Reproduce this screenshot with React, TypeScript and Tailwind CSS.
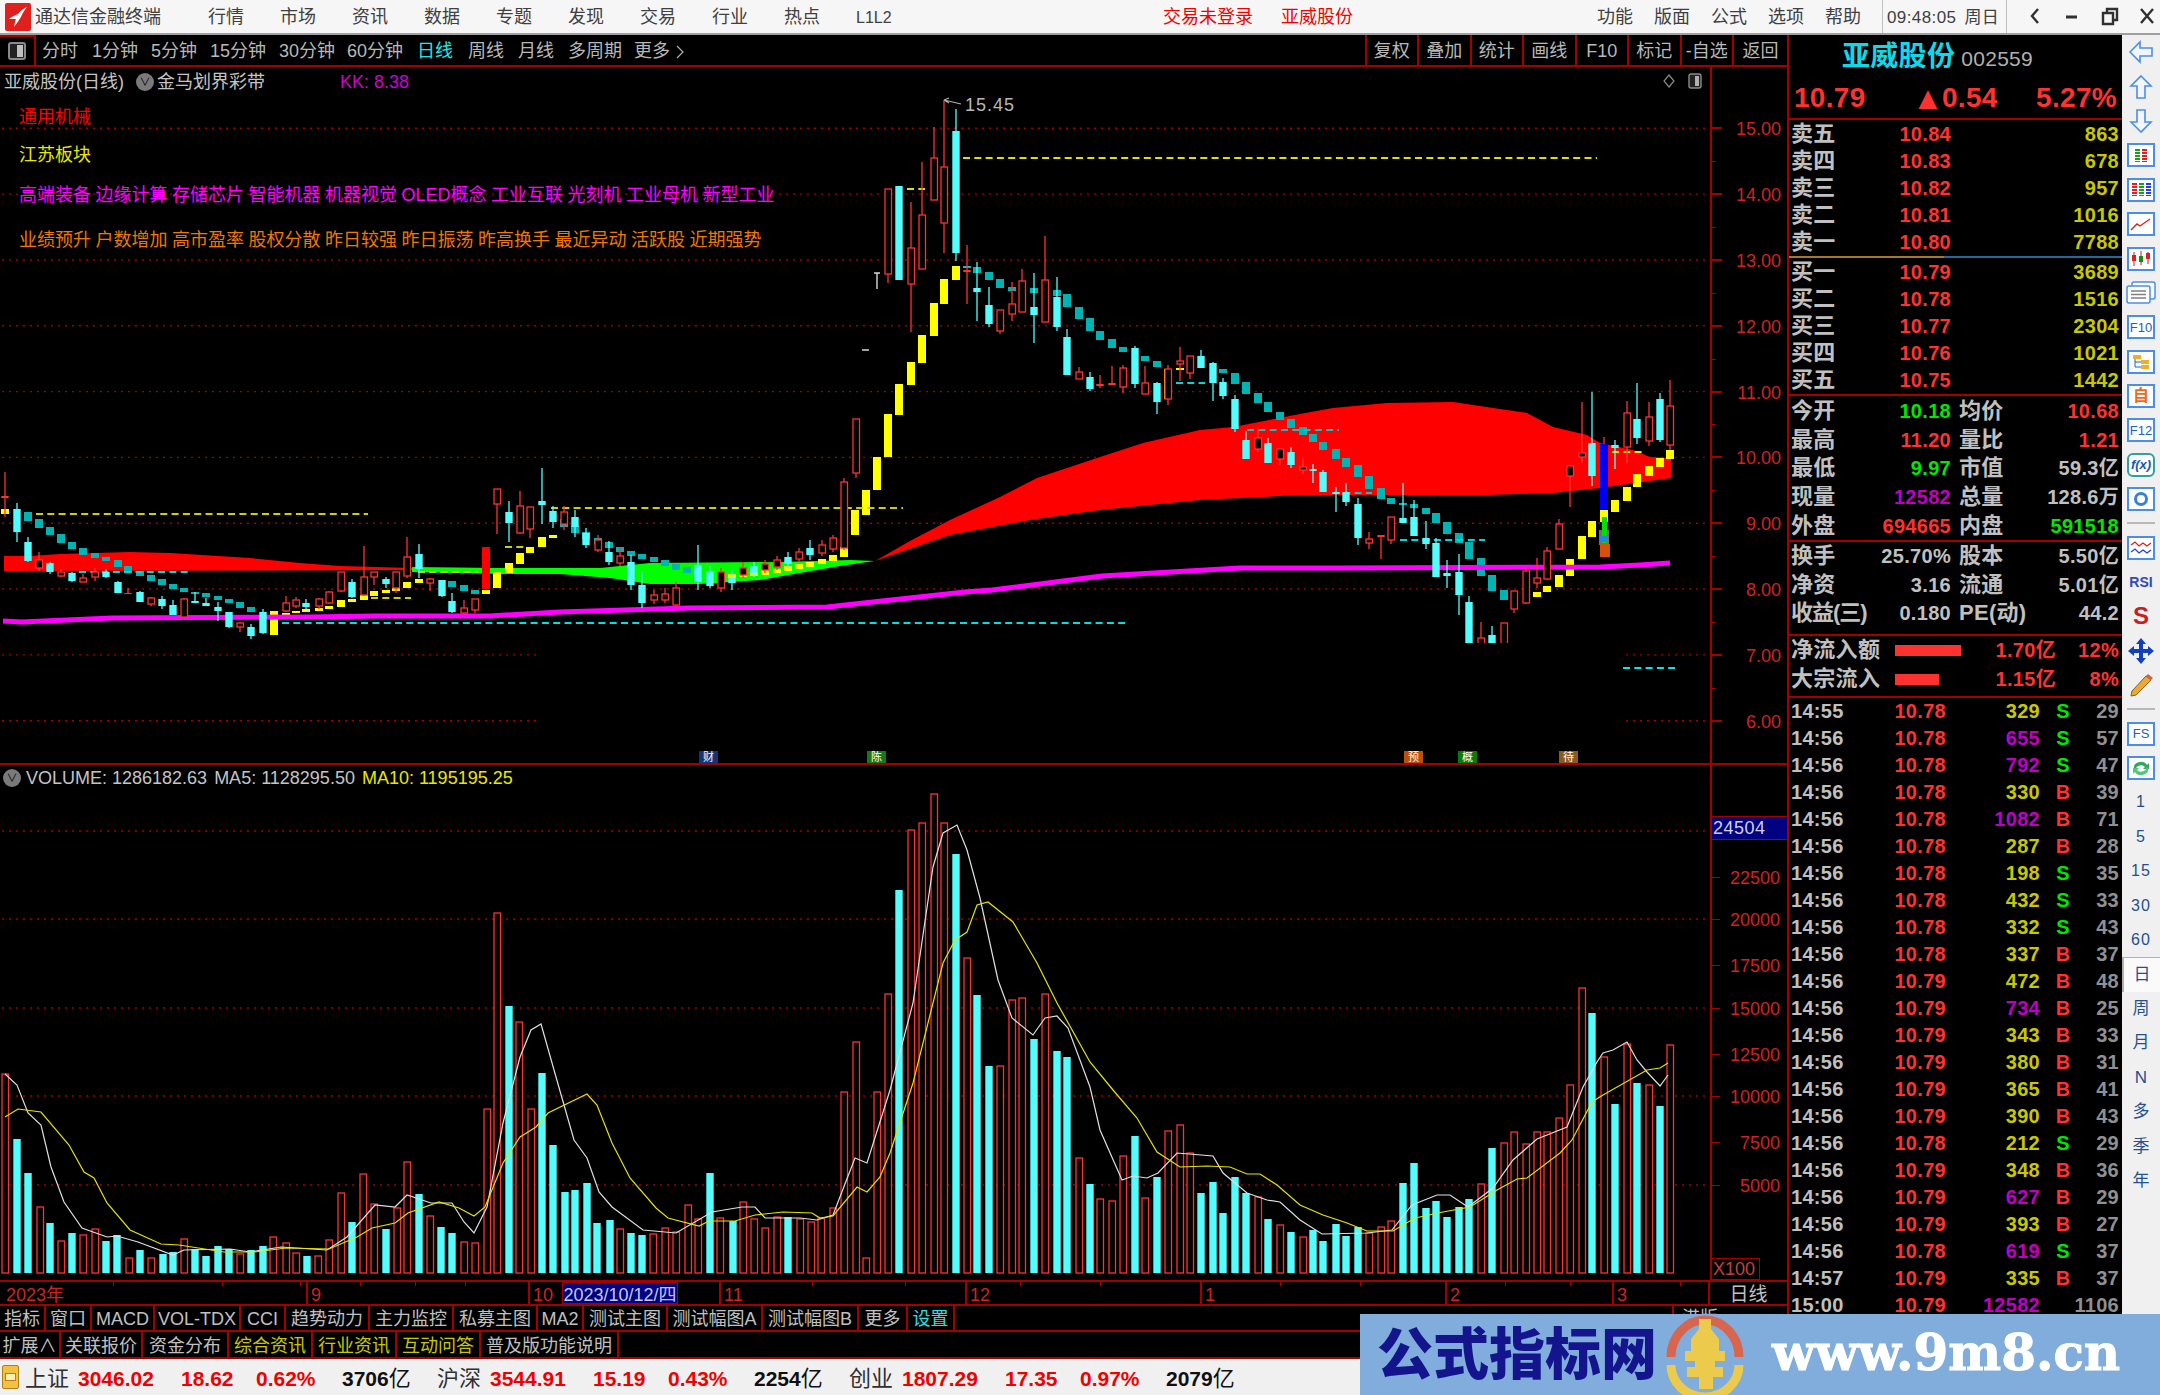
import React from "react";

type Candle = [number, number, number, number, number, "r" | "c" | "f"];
type Band = [number, number, number, "t" | "y" | "x"];

const RED = "#ff3232";
const CYAN = "#54fcfc";
const LINE = "border-[#a50000]";

// [x, top, bottom, colour] the ribbon squares behind the candles
const bands: Band[] = [
  [5,509,514,"y"],[28,512,521,"t"],[39,519,528,"t"],[50,527,535,"t"],[61,534,543,"t"],[72,542,549,"t"],[83,548,555,"t"],[95,553,558,"t"],[106,557,561,"t"],[118,560,567,"t"],[128,566,573,"t"],[140,571,576,"t"],[151,575,581,"t"],[162,579,585,"t"],[173,584,589,"t"],[184,588,592,"t"],[195,592,594,"t"],[206,593,597,"t"],[218,596,600,"t"],[229,599,603,"t"],[240,602,608,"t"],[251,607,612,"t"],[274,611,635,"y"],[286,613,617,"y"],[296,611,613,"y"],[306,609,612,"y"],[319,608,611,"y"],[329,606,609,"y"],[341,600,607,"y"],[352,599,602,"y"],[364,595,600,"y"],[374,591,596,"y"],[386,590,593,"y"],[396,588,591,"y"],[407,582,588,"y"],[419,579,583,"y"],[452,581,587,"t"],[464,585,591,"t"],[475,590,594,"t"],[486,590,594,"y"],[497,572,588,"y"],[509,563,573,"y"],[520,553,564,"y"],[530,547,553,"y"],[542,537,547,"y"],[553,535,538,"y"],
  [564,519,527,"t"],[575,526,533,"t"],[586,532,539,"t"],[598,538,544,"t"],[609,542,548,"t"],[620,547,552,"t"],[631,551,556,"t"],[642,554,559,"t"],[654,557,562,"t"],[665,560,566,"t"],[676,564,570,"t"],[687,567,573,"t"],[698,570,575,"t"],[732,574,578,"y"],[743,573,577,"y"],[754,572,576,"y"],[765,570,575,"y"],[777,569,573,"y"],[788,566,571,"y"],[799,564,569,"y"],[810,562,567,"y"],[822,559,564,"y"],[833,555,561,"y"],[844,547,557,"y"],[855,510,535,"y"],[866,490,515,"y"],[877,457,490,"y"],
  [888,414,457,"y"],[899,384,415,"y"],[911,362,385,"y"],[922,335,363,"y"],[934,303,336,"y"],[944,279,304,"y"],[956,266,280,"y"],[967,266,268,"t"],[977,267,273,"t"],[989,272,280,"t"],[1000,279,288,"t"],[1012,287,291,"t"],[1034,288,293,"t"],[1057,290,296,"t"],[1067,294,307,"t"],[1079,307,319,"t"],[1090,318,331,"t"],[1100,331,340,"t"],[1112,339,348,"t"],[1123,347,352,"t"],[1145,356,361,"t"],[1157,361,367,"t"],[1168,369,399,"y"],[1180,368,370,"y"],[1223,369,373,"t"],[1235,373,384,"t"],[1246,382,394,"t"],[1258,393,403,"t"],[1268,402,412,"t"],[1280,412,420,"t"],[1291,419,428,"t"],
  [1303,427,435,"t"],[1313,434,442,"t"],[1323,442,450,"t"],[1336,449,459,"t"],[1346,458,467,"t"],[1358,465,477,"t"],[1369,476,489,"t"],[1381,488,499,"t"],[1391,498,504,"t"],[1403,503,505,"t"],[1414,504,508,"t"],[1426,508,514,"t"],[1436,513,523,"t"],[1447,522,534,"t"],[1459,533,543,"t"],[1469,542,559,"t"],[1481,558,576,"t"],[1492,575,591,"t"],[1504,590,600,"t"],[1537,592,597,"y"],[1547,586,592,"y"],[1559,575,587,"y"],[1570,559,576,"y"],[1582,536,559,"y"],[1592,521,537,"y"],[1604,510,522,"y"],[1615,500,512,"y"],[1627,487,501,"y"],[1637,474,487,"y"],[1649,466,476,"y"],[1660,458,467,"y"],[1670,450,459,"y"],
];

// [x, high, top, bottom, low, kind]
const candles: Candle[] = [
  [5,472,496,498,517,"f"],[17,503,509,532,542,"c"],[28,537,542,561,562,"c"],[39,552,560,568,571,"r"],[50,562,563,572,574,"c"],[61,569,572,576,577,"r"],[72,572,573,581,582,"c"],[83,574,578,582,582,"r"],[95,568,572,577,581,"r"],[106,569,572,577,578,"c"],[118,581,582,593,593,"c"],[128,588,593,594,594,"f"],[140,591,592,602,602,"c"],[151,597,598,604,606,"r"],[162,596,599,606,609,"c"],[173,600,605,615,615,"c"],[184,598,599,617,617,"r"],[195,592,601,603,603,"c"],[206,598,603,606,606,"c"],[218,602,607,611,621,"c"],[229,612,612,627,628,"c"],[240,622,623,627,632,"r"],[251,624,627,636,639,"c"],[263,609,612,633,634,"c"],[286,596,603,611,612,"r"],[296,597,600,606,608,"r"],[306,599,603,607,609,"c"],[319,598,599,606,609,"r"],[329,591,592,603,604,"r"],[341,572,572,591,592,"r"],[352,579,582,597,598,"c"],[364,546,577,595,596,"r"],[374,572,572,577,585,"r"],[386,577,579,584,588,"c"],[396,572,572,588,593,"r"],[407,537,557,576,578,"r"],[419,544,554,569,578,"c"],[430,578,579,583,591,"r"],[442,580,580,596,597,"c"],[452,593,601,612,613,"c"],[464,600,608,613,614,"r"],[475,599,599,610,613,"r"],[497,489,489,504,534,"r"],[509,501,512,523,542,"c"],[520,491,506,533,534,"r"],[530,507,507,529,538,"r"],[542,468,501,505,524,"c"],[553,506,511,522,528,"c"],
  [564,506,512,524,530,"r"],[575,510,517,527,537,"c"],[586,528,533,545,548,"c"],[598,535,540,550,552,"r"],[609,541,552,562,565,"c"],[620,548,556,563,566,"r"],[631,555,562,585,590,"c"],[642,572,585,603,608,"c"],[654,590,595,600,604,"r"],[665,588,594,600,603,"r"],[676,582,588,605,607,"r"],[698,545,565,582,590,"c"],[710,566,571,586,588,"c"],[721,568,572,588,592,"r"],[732,570,578,583,590,"c"],[743,562,568,575,578,"r"],[754,562,566,573,577,"c"],[765,560,564,570,573,"r"],[777,556,560,567,570,"r"],[788,552,557,564,568,"c"],[799,548,552,559,562,"r"],[810,540,548,555,560,"c"],[822,540,545,553,556,"r"],[833,535,538,549,552,"r"],[844,478,482,548,550,"r"],
  [856,419,419,473,478,"r"],[888,189,189,274,283,"r"],[899,186,186,280,280,"c"],[911,202,248,284,332,"r"],[922,162,215,269,269,"r"],[934,127,158,200,200,"r"],[944,100,167,223,253,"r"],[956,109,131,253,261,"c"],[967,245,270,272,304,"f"],[977,262,288,292,321,"c"],[989,287,305,324,327,"c"],[1000,310,310,331,334,"r"],[1012,282,304,314,321,"r"],[1022,269,281,312,312,"r"],[1034,273,307,315,343,"c"],[1045,236,280,322,322,"r"],[1057,277,297,327,331,"c"],[1067,329,337,375,375,"c"],[1079,367,372,379,379,"r"],[1090,372,377,389,391,"c"],[1100,375,384,386,388,"f"],[1112,366,383,385,385,"f"],[1123,365,368,387,393,"r"],[1135,346,348,384,388,"c"],[1145,366,383,394,394,"r"],[1157,382,383,402,414,"c"],[1168,365,369,399,405,"r"],[1180,347,361,364,381,"r"],[1190,356,356,373,379,"r"],[1201,350,356,368,368,"c"],[1213,362,363,383,401,"c"],[1223,378,382,396,399,"c"],[1235,395,399,429,432,"c"],[1246,431,440,459,459,"c"],[1258,428,438,449,452,"r"],[1268,438,443,463,463,"c"],[1280,449,449,459,465,"r"],[1291,447,452,465,468,"c"],
  [1303,458,467,470,474,"r"],[1313,464,469,471,483,"c"],[1323,470,472,492,492,"c"],[1336,487,492,494,512,"c"],[1346,483,492,502,506,"c"],[1358,498,504,538,545,"c"],[1369,532,539,543,549,"r"],[1381,535,535,537,559,"f"],[1391,517,517,540,544,"r"],[1403,483,518,523,523,"c"],[1414,500,517,536,536,"c"],[1426,521,538,544,549,"c"],[1436,538,543,577,577,"c"],[1447,560,573,576,588,"c"],[1459,554,572,595,615,"c"],[1469,596,602,650,650,"c"],[1481,622,638,650,650,"r"],[1492,626,635,650,650,"c"],[1504,623,623,650,650,"r"],[1514,591,591,609,613,"r"],[1526,567,571,603,604,"r"],[1537,558,578,583,588,"r"],[1547,547,551,579,580,"r"],[1559,519,524,549,549,"r"],[1570,466,466,476,507,"r"],[1582,402,453,457,463,"r"],[1592,392,443,476,486,"c"],[1615,440,445,448,469,"c"],[1627,401,413,447,463,"r"],[1637,383,419,438,444,"c"],[1649,402,417,441,446,"r"],[1660,393,399,440,442,"c"],[1670,380,406,445,450,"r"],
];

// [x, top, kind] volume bars, baseline 1273
const volumes: [number, number, "r" | "c"][] = [
  [5,1074,"r"],[17,1139,"c"],[28,1173,"c"],[40,1207,"r"],[50,1223,"c"],[61,1241,"r"],[72,1233,"c"],[83,1235,"r"],[95,1229,"r"],[106,1241,"c"],[117,1235,"c"],[129,1258,"r"],[140,1250,"c"],[151,1258,"r"],[163,1254,"c"],[173,1252,"c"],[184,1239,"r"],[195,1249,"c"],[206,1256,"c"],[218,1246,"c"],[229,1249,"c"],[240,1254,"r"],[251,1250,"c"],[263,1246,"c"],[273,1237,"r"],[286,1243,"r"],[296,1253,"r"],[307,1256,"c"],[318,1256,"r"],[329,1240,"r"],[341,1193,"r"],[352,1222,"c"],[363,1174,"r"],[374,1204,"r"],[386,1229,"c"],[397,1208,"r"],[407,1162,"r"],[419,1194,"c"],[430,1216,"r"],[441,1227,"c"],[452,1233,"c"],[464,1242,"r"],[475,1243,"r"],[487,1109,"r"],[497,913,"r"],[509,1006,"c"],[519,1022,"r"],[531,1109,"r"],[542,1073,"c"],[553,1145,"c"],[565,1192,"c"],[575,1190,"c"],[587,1183,"c"],[597,1223,"c"],[610,1220,"c"],[620,1229,"r"],[631,1233,"c"],[642,1235,"c"],[653,1234,"r"],[665,1228,"r"],[676,1232,"r"],[688,1205,"r"],[698,1219,"r"],[710,1173,"c"],[720,1218,"r"],[733,1221,"c"],[743,1202,"r"],[754,1219,"r"],[765,1228,"r"],[777,1217,"r"],[788,1217,"c"],
  [800,1219,"r"],[811,1222,"r"],[821,1218,"r"],[833,1208,"r"],[844,1092,"r"],[856,1042,"r"],[866,1258,"r"],[877,1092,"r"],[888,994,"r"],[899,890,"c"],[911,830,"r"],[922,823,"r"],[934,794,"r"],[944,823,"r"],[956,854,"c"],[967,958,"r"],[977,995,"c"],[989,1066,"c"],[1000,1066,"r"],[1012,1000,"r"],[1022,998,"r"],[1034,1039,"c"],[1045,994,"r"],[1057,1051,"c"],[1067,1057,"c"],[1079,1158,"r"],[1090,1184,"c"],[1100,1199,"r"],[1112,1201,"r"],[1123,1156,"r"],[1135,1136,"c"],[1145,1198,"r"],[1157,1177,"c"],[1168,1131,"r"],[1180,1125,"r"],[1190,1153,"r"],[1201,1193,"c"],[1213,1182,"c"],[1223,1213,"c"],[1235,1177,"c"],[1246,1193,"c"],[1258,1197,"r"],[1268,1219,"c"],[1280,1225,"r"],[1291,1232,"c"],
  [1303,1237,"r"],[1313,1230,"c"],[1323,1241,"c"],[1336,1224,"c"],[1346,1236,"c"],[1358,1227,"c"],[1369,1233,"r"],[1381,1227,"r"],[1391,1221,"r"],[1403,1183,"c"],[1414,1163,"c"],[1426,1208,"c"],[1436,1201,"c"],[1447,1217,"c"],[1459,1207,"c"],[1469,1199,"c"],[1481,1184,"r"],[1492,1148,"c"],[1504,1143,"r"],[1514,1132,"r"],[1526,1144,"r"],[1537,1132,"r"],[1547,1132,"r"],[1559,1118,"r"],[1570,1085,"r"],[1582,988,"r"],[1592,1013,"c"],[1604,1057,"r"],[1615,1104,"c"],[1627,1044,"r"],[1637,1083,"c"],[1649,1085,"r"],[1660,1106,"c"],[1670,1045,"r"],
];

const ma5 = "5,1074 17,1085 28,1113 41,1125 51,1167 64,1202 82,1228 107,1237 117,1236 138,1242 173,1255 184,1250 230,1249 250,1252 281,1247 327,1250 347,1237 375,1205 395,1207 407,1195 431,1203 452,1203 464,1222 474,1233 487,1207 503,1123 520,1057 531,1030 541,1024 556,1077 574,1140 587,1158 599,1192 612,1207 643,1230 676,1233 712,1212 742,1207 755,1207 765,1218 800,1218 817,1220 833,1215 855,1158 867,1163 890,1090 913,1003 933,867 943,833 957,825 967,850 980,898 998,980 1012,1018 1033,1035 1045,1018 1057,1016 1068,1028 1090,1087 1100,1130 1122,1180 1133,1176 1147,1178 1158,1173 1177,1153 1213,1156 1223,1173 1247,1193 1267,1200 1280,1202 1300,1220 1322,1234 1367,1233 1392,1230 1412,1205 1437,1195 1450,1195 1468,1207 1493,1188 1513,1160 1537,1139 1567,1127 1583,1087 1597,1062 1603,1053 1613,1050 1627,1042 1637,1060 1647,1072 1660,1086 1668,1075";
const ma10 = "5,1117 18,1109 41,1112 69,1145 84,1172 94,1178 107,1203 130,1230 161,1244 179,1245 224,1252 255,1252 286,1248 329,1249 357,1237 372,1228 395,1223 408,1213 439,1202 459,1208 474,1216 485,1207 503,1163 520,1137 536,1127 548,1113 587,1094 597,1105 612,1143 630,1178 656,1208 668,1218 699,1226 709,1221 735,1221 755,1215 783,1212 812,1213 820,1218 833,1216 857,1187 867,1192 880,1177 890,1153 913,1083 943,963 955,940 967,932 977,905 988,902 1013,922 1037,963 1057,1003 1090,1062 1113,1090 1137,1118 1157,1152 1180,1167 1207,1166 1230,1167 1247,1174 1260,1174 1277,1185 1300,1205 1323,1215 1347,1223 1367,1231 1393,1231 1415,1218 1443,1212 1470,1207 1497,1190 1517,1179 1527,1178 1560,1153 1572,1140 1592,1102 1603,1095 1647,1070 1660,1068 1668,1063";

const cloudA = "4,556 30,556 60,554 130,552 170,553 250,558 300,563 340,566 412,568 412,570 4,571";
const cloudGreen = "412,567 500,568 600,568 650,563 780,562 850,560 875,561 840,566 800,573 760,580 700,584 650,584 610,578 560,574 500,574 412,572";
const cloudB = "875,561 910,541 950,520 1000,497 1037,478 1100,457 1143,443 1200,430 1233,427 1300,414 1333,408 1387,403 1453,402 1500,409 1527,413 1553,427 1587,435 1600,443 1633,450 1650,457 1671,458 1671,478 1643,482 1600,488 1553,493 1487,495 1300,495 1200,500 1100,510 1030,520 950,535";
const purple = "3,621 22,622 112,618 310,617 375,616 490,616 525,614 560,612 689,608 827,607 882,601 965,592 992,590 1102,576 1240,568 1340,568 1600,567 1640,565 1670,563";

// [y, x1, x2, colour] dashed level lines
const levels: [number, number, number, string][] = [
  [158,963,1597,"#e0e000"],[189,907,925,"#e0e000"],[267,963,970,"#00c8c8"],[514,36,368,"#d0d000"],[508,551,903,"#d0d000"],[572,79,188,"#00d8d8"],[623,282,1127,"#00e0e0"],[598,371,411,"#d0d000"],[572,418,478,"#d0d000"],[547,505,525,"#d0d000"],[383,1176,1205,"#00d8d8"],[430,1247,1339,"#00c8c8"],[493,1332,1372,"#00c8c8"],[540,1400,1485,"#00d8d8"],[668,1623,1675,"#00e8e8"],[452,1612,1642,"#e8e800"],
];

const priceAxis = [15, 14, 13, 12, 11, 10, 9, 8, 7, 6];
const volGrid = [831, 919, 1008, 1096, 1185];
const volAxis: [string, number][] = [["22500",877],["20000",919],["17500",965],["15000",1008],["12500",1054],["10000",1096],["7500",1142],["5000",1185]];

const priceY = (p: number) => 128.3 + (15 - p) * 65.82;

const bandColor = { t: "#00b4b4", y: "#ffff00", x: "#ff0000" };

function PriceSvg() {
  return (
    <svg className="absolute inset-0" width={1710} height={696} viewBox="0 67 1710 696">
      {priceAxis.map((p) => (
        <line key={p} x1={2} x2={1710} y1={priceY(p)} y2={priceY(p)} stroke="#a00000" strokeWidth={1.4} strokeDasharray="2 5" />
      ))}
      <polygon points={cloudA} fill="#ff0000" />
      <polygon points={cloudGreen} fill="#00ff00" />
      <polygon points={cloudB} fill="#ff0000" />
      <rect x={482} y={547} width={8} height={42} fill="#ff0000" />
      {bands.map(([x, t, b, c], i) => (
        <rect key={i} x={x - 4} y={t} width={8} height={b - t} fill={bandColor[c]} />
      ))}
      <polyline points={purple} fill="none" stroke="#ff00ff" strokeWidth={5} />
      {levels.map(([y, a, b, c], i) => (
        <line key={i} x1={a} x2={b} y1={y} y2={y} stroke={c} strokeWidth={2} strokeDasharray="7 4.3" />
      ))}
      {candles.map(([x, h, t, b, l, k], i) => {
        const col = k === "c" ? CYAN : RED;
        return (
          <g key={i}>
            <line x1={x} x2={x} y1={h} y2={l} stroke={col} strokeWidth={1.3} />
            {k === "r" ? (
              <rect x={x - 3} y={t} width={6.5} height={b - t} fill="#000" stroke={col} strokeWidth={1.3} />
            ) : (
              <rect x={x - 3.7} y={t} width={7.4} height={b - t} fill={col} />
            )}
          </g>
        );
      })}
      {/* the limit-up stack on the left of the last rally */}
      <rect x={1600} y={444} width={8} height={66} fill="#0000f0" />
      <line x1={1604} x2={1604} y1={437} y2={444} stroke={RED} strokeWidth={1.3} />
      <rect x={1599} y={530} width={10} height={15} fill="#707070" />
      <rect x={1602} y={517} width={5} height={26} fill="#00e000" />
      <rect x={1600} y={536} width={8} height={6} fill="#2088e0" />
      <rect x={1600} y={544} width={10} height={13} fill="#d85010" />
      {/* black patch that hides the lows in the reference */}
      <rect x={537} y={643} width={1084} height={100} fill="#000" />
      <path d="M944 100 L949 98 M944 100 L949 103 M944 100 L961 104" stroke="#b0b0b0" strokeWidth={1.2} fill="none" />
      <path d="M874 273 H880 M877 273 V289" stroke="#d8d8d8" strokeWidth={1.4} fill="none" />
      <path d="M862 350 H869" stroke="#d8d8d8" strokeWidth={1.5} />
    </svg>
  );
}

function VolumeSvg() {
  return (
    <svg className="absolute inset-0" width={1710} height={517} viewBox="0 765 1710 517">
      {volGrid.map((y) => (
        <line key={y} x1={2} x2={1710} y1={y} y2={y} stroke="#a00000" strokeWidth={1.4} strokeDasharray="2 5" />
      ))}
      {volumes.map(([x, t, k], i) =>
        k === "c" ? (
          <rect key={i} x={x - 3.7} y={t} width={7.4} height={1273 - t} fill={CYAN} />
        ) : (
          <rect key={i} x={x - 3} y={t} width={6.5} height={1273 - t} fill="#000" stroke={RED} strokeWidth={1.3} />
        ),
      )}
      <polyline points={ma5} fill="none" stroke="#e0e0e0" strokeWidth={1.2} />
      <polyline points={ma10} fill="none" stroke="#e4e400" strokeWidth={1.2} />
    </svg>
  );
}

const tags: [number, string, string][] = [
  [699, "财", "#12357a"],
  [867, "陈", "#157a15"],
  [1404, "预", "#b8500f"],
  [1458, "概", "#0b7a0b"],
  [1559, "待", "#8c5a20"],
];

function TextRows() {
  return (
    <div className="absolute inset-0 text-[18px] leading-none whitespace-nowrap">
      <div className="flex items-center h-[29px] pt-[1px] text-[#c4c4c4] pl-1">
        <span className="w-[132px]">亚威股份(日线)</span>
        <span className="w-[18px] h-[18px] rounded-full bg-[#7a7a7a] text-black text-[11px] flex items-center justify-center mr-[1px]">∨</span>
        <span className="w-[183px] ml-[2px]">金马划界彩带</span>
        <span className="text-[#d000d0]">KK: 8.38</span>
      </div>
      <div className="pl-[19px]">
        <div className="text-[#ff0000] mt-[12px]">通用机械</div>
        <div className="text-[#e8e800] mt-[20px]">江苏板块</div>
        <div className="text-[#ff00ff] mt-[22px] flex gap-[4.5px]">
          {["高端装备","边缘计算","存储芯片","智能机器","机器视觉","OLED概念","工业互联","光刻机","工业母机","新型工业"].map((t) => (
            <span key={t}>{t}</span>
          ))}
        </div>
        <div className="text-[#f07800] mt-[27px] flex gap-[4.5px]">
          {["业绩预升","户数增加","高市盈率","股权分散","昨日较强","昨日振荡","昨高换手","最近异动","活跃股","近期强势"].map((t) => (
            <span key={t}>{t}</span>
          ))}
        </div>
      </div>
      <span className="absolute left-[965px] top-[29px] text-[#b8b8b8] tracking-[1px]">15.45</span>
      {tags.map(([x, t, c]) => (
        <span key={x} style={{ left: x, backgroundColor: c }} className="absolute top-[684px] w-[19px] h-[12px] text-[11px] leading-[12px] text-white text-center">{t}</span>
      ))}
      <svg className="absolute left-[1662px] top-[6px]" width={40} height={16} viewBox="0 0 40 16">
        <path d="M7 2 L12 8 L7 14 L2 8 Z" fill="none" stroke="#8a8a8a" strokeWidth={1.2} />
        <rect x={27} y={1} width={12} height={14} rx={2} fill="#222" stroke="#8a8a8a" strokeWidth={1.4} />
        <rect x={33} y={3} width={4} height={10} fill="#b0b0b0" />
      </svg>
    </div>
  );
}

function PriceAxis() {
  return (
    <div className="relative flex-1 text-[18px] text-[#d42020]">
      {priceAxis.map((p) => (
        <div key={p}>
          <div style={{ top: priceY(p) - 68 }} className="absolute left-0 w-[10px] h-[2px] bg-[#a50000]" />
          <div style={{ top: priceY(p) - 66 - 11 }} className="absolute right-[6px] h-[22px] leading-[22px]">{p.toFixed(2)}</div>
          {p > 6 && <div style={{ top: priceY(p - 0.5) - 67 }} className="absolute left-0 w-[4px] h-[1px] bg-[#a50000]" />}
        </div>
      ))}
    </div>
  );
}

function VolumeAxis() {
  return (
    <div className="relative flex-1 text-[18px] text-[#d42020]">
      <div className="absolute left-0 right-0 top-[51px] h-[24px] bg-[#000080] border-y border-[#a50000] text-[#d0d0e8] leading-[22px] pl-[1px] tracking-[0.5px]">24504</div>
      {volAxis.map(([t, y]) => (
        <div key={t}>
          <div style={{ top: y - 765 }} className="absolute left-0 w-[8px] h-[1px] bg-[#a50000]" />
          <div style={{ top: y - 764 - 11 }} className="absolute right-[7px] h-[22px] leading-[22px]">{t}</div>
        </div>
      ))}
      <div className="absolute left-0 bottom-0 w-[48px] h-[22px] border border-[#a50000] border-l-0 text-[#c04040] leading-[20px] pl-[1px]">X100</div>
    </div>
  );
}

const dateMarks: [number, string][] = [
  [3, "2023年"], [306, "9"], [528, "10"], [719, "11"], [965, "12"], [1200, "1"], [1445, "2"], [1612, "3"],
];
const dateTicks = [113, 222, 300, 360, 415, 465, 590, 640, 812, 905, 1020, 1100, 1280, 1360, 1505, 1570, 1680];

function DateAxis() {
  return (
    <div className={`relative h-[24px] flex-none border-b-2 ${LINE} text-[18px] text-[#d42020] leading-[26px] flex`}>
      <div className={`relative w-[1710px] border-r-2 ${LINE}`}>
        {dateTicks.map((x) => (
          <div key={x} style={{ left: x }} className="absolute top-0 w-[1px] h-[4px] bg-[#a50000]" />
        ))}
        {dateMarks.map(([x, t]) => (
          <div key={t} style={{ left: x }} className={`absolute top-0 h-full pl-[3px] ${x > 3 ? "border-l-2 border-[#a50000]" : ""}`}>{t}</div>
        ))}
        <div className="absolute left-[562px] top-0 w-[116px] h-full bg-[#000080] border border-[#a50000] text-[#c8c8e8] text-center leading-[24px]">2023/10/12/四</div>
      </div>
      <div className="flex-1 text-center text-[#c0c0c0] text-[19px]">日线</div>
    </div>
  );
}

const tabsA: [string, number, string?][] = [
  ["指标",46],["窗口",46],["MACD",63],["VOL-TDX",86],["CCI",45],["趋势动力",84],["主力监控",84],["私募主图",84],["MA2",46],["测试主图",84],["测试幅图A",95],["测试幅图B",96],["更多",49],["设置",47,"text-[#30e0e0]"],
];
const tabsB: [string, number, string?][] = [
  ["扩展∧",61],["关联报价",82],["资金分布",86],["综合资讯",84,"text-[#c8c800]"],["行业资讯",84,"text-[#c8c800]"],["互动问答",84,"text-[#c8c800]"],["普及版功能说明",138],
];

function TabRow({ items, h, tail }: { items: [string, number, string?][]; h: string; tail?: string }) {
  return (
    <div className={`${h} flex-none flex border-b-2 ${LINE} text-[18px] text-[#c0c0c0] whitespace-nowrap`}>
      {items.map(([t, w, c]) => (
        <div key={t} style={{ width: w }} className={`flex-none flex items-center justify-center pt-[3px] border-r-2 ${LINE} ${c ?? ""}`}>{t}</div>
      ))}
      {tail && <div className={`ml-auto w-[115px] flex-none border-l-2 ${LINE} pl-[8px] flex items-center`}>{tail}</div>}
    </div>
  );
}

const modes = [
  ["分时", 50], ["1分钟", 59], ["5分钟", 59], ["15分钟", 69], ["30分钟", 68], ["60分钟", 70],
] as const;

function Toolbar() {
  return (
    <div className={`h-[32px] flex-none flex border-b-2 ${LINE} text-[18px] text-[#b8b8b8] whitespace-nowrap`}>
      <div className={`w-[36px] flex-none flex items-center justify-center border-r-2 border-t-2 ${LINE}`}>
        <div className="w-[18px] h-[18px] rounded-[3px] border-2 border-[#8a8a8a] bg-[#222] flex justify-end p-[1px]">
          <div className="w-[6px] h-full bg-[#c0c0c0]" />
        </div>
      </div>
      <div className="flex items-center pl-[6px] pt-[3px]">
        {modes.map(([t, w]) => (
          <span key={t} style={{ width: w }}>{t}</span>
        ))}
        <span className="w-[51px] text-[#20e8e8]">日线</span>
        <span className="w-[50px]">周线</span>
        <span className="w-[50px]">月线</span>
        <span className="w-[66px]">多周期</span>
        <span>更多</span>
        <svg width={12} height={18} viewBox="0 0 12 18" className="ml-[4px]"><path d="M3 3 L9 9 L3 15" stroke="#b0b0b0" strokeWidth={1.2} fill="none" /></svg>
      </div>
      <div className={`ml-auto flex`}>
        {["复权","叠加","统计","画线","F10","标记","-自选","返回"].map((t, i) => (
          <div key={t} className={`flex items-center justify-center h-full pt-[3px] border-l-2 ${LINE} ${i === 7 ? "w-[55px]" : "w-[52.5px]"}`}>{t}</div>
        ))}
      </div>
    </div>
  );
}

function Logo() {
  return (
    <svg width={26} height={28} viewBox="0 0 26 28" className="flex-none">
      <rect width={26} height={28} rx={2} fill="#e0201c" />
      <path d="M4 16 C8 13 11 12 13 11 C15 8 18 6 22 4 C19 8 17 11 16 14 C14 17 12 20 9 24 C10 20 10 18 11 16 C9 16 6 16 4 16 Z" fill="#fff" />
    </svg>
  );
}

function TopBar() {
  const menu = ["行情","市场","资讯","数据","专题","发现","交易","行业","热点"];
  return (
    <div className="h-[35px] flex-none bg-[#f6f6f6] border-b-2 border-[#a0a0a0] flex items-center text-[18px] text-[#404040] whitespace-nowrap pl-[5px]">
      <Logo />
      <div className="flex items-center pt-[2px]">
        <span className="ml-[4px] w-[173px]">通达信金融终端</span>
        {menu.map((t) => (
          <span key={t} className="w-[72px]">{t}</span>
        ))}
        <span className="w-[307px] text-[16px]">L1L2</span>
        <span className="w-[118px] text-[#f00000]">交易未登录</span>
        <span className="w-[316px] text-[#f00000]">亚威股份</span>
        {["功能","版面","公式","选项","帮助"].map((t) => (
          <span key={t} className="w-[57px]">{t}</span>
        ))}
      </div>
      <div className="h-full border-l border-[#c0c0c0] w-[124px] flex items-center pl-[4px] pt-[2px] text-[17px] tracking-[0.4px] gap-[8px]">
        <span>09:48:05</span><span>周日</span>
      </div>
      <div className="h-full border-l border-[#c0c0c0] flex-1 relative text-[#303030]">
        <svg width={156} height={33} viewBox="0 0 156 33" className="absolute left-0 top-0">
          <path d="M31 9 L25 16 L31 23" stroke="#303030" strokeWidth={2.4} fill="none" />
          <path d="M59 17 H70" stroke="#303030" strokeWidth={3} />
          <path d="M96 13 H106 V24 H96 Z M100 13 V9 H110 V20 H106" stroke="#303030" strokeWidth={2.4} fill="none" />
          <path d="M134 9 L146 23 M146 9 L134 23" stroke="#303030" strokeWidth={2.4} />
        </svg>
      </div>
    </div>
  );
}

const asks = [["卖五","10.84","863"],["卖四","10.83","678"],["卖三","10.82","957"],["卖二","10.81","1016"],["卖一","10.80","7788"]];
const bids = [["买一","10.79","3689"],["买二","10.78","1516"],["买三","10.77","2304"],["买四","10.76","1021"],["买五","10.75","1442"]];

const G = "text-[#c0c0c0]";
const R = "text-[#ff3232]";
const N = "text-[#00e800]";
const M = "text-[#c000c0]";

const info: [string, string, string, string, string, string][] = [
  ["今开","10.18",N,"均价","10.68",R],
  ["最高","11.20",R,"量比","1.21",R],
  ["最低","9.97",N,"市值","59.3亿",G],
  ["现量","12582",M,"总量","128.6万",G],
  ["外盘","694665",R,"内盘","591518",N],
];
const info2: [string, string, string, string][] = [
  ["换手","25.70%","股本","5.50亿"],
  ["净资","3.16","流通","5.01亿"],
  ["收益(三)","0.180","PE(动)","44.2"],
];

const ticks: [string, string, string, string, string][] = [
  ["14:55","10.78","329","S","29"],["14:56","10.78","655m","S","57"],["14:56","10.78","792m","S","47"],["14:56","10.78","330","B","39"],["14:56","10.78","1082m","B","71"],["14:56","10.78","287","B","28"],["14:56","10.78","198","S","35"],["14:56","10.78","432","S","33"],["14:56","10.78","332","S","43"],["14:56","10.78","337","B","37"],["14:56","10.79","472","B","48"],["14:56","10.79","734m","B","25"],["14:56","10.79","343","B","33"],["14:56","10.79","380","B","31"],["14:56","10.79","365","B","41"],["14:56","10.79","390","B","43"],["14:56","10.78","212","S","29"],["14:56","10.79","348","B","36"],["14:56","10.79","627m","B","29"],["14:56","10.79","393","B","27"],["14:56","10.78","619m","S","37"],["14:57","10.79","335","B","37"],["15:00","10.79","12582m","","1106"],
];

function QuoteRows({ rows }: { rows: string[][] }) {
  return (
    <>
      {rows.map(([a, p, v]) => (
        <div key={a} className="h-[27px] grid grid-cols-[70px_90px_1fr] items-center pl-[2px] pr-[3px]">
          <span className={`text-[22px] ${G}`}>{a}</span>
          <span className={`text-right ${R}`}>{p}</span>
          <span className="text-right text-[#c8c800]">{v}</span>
        </div>
      ))}
    </>
  );
}

function RightPanel() {
  return (
    <div className={`w-[335px] flex-none border-l-2 ${LINE} text-[20px] leading-none font-bold whitespace-nowrap overflow-hidden tracking-[0.3px]`}>
      <div className={`h-[85px] border-b-2 ${LINE}`}>
        <div className="h-[44px] flex items-center pl-[53px] gap-[6px]">
          <span className="text-[28px] text-[#10d8e8] font-bold">亚威股份</span>
          <span className="text-[21px] text-[#b0b0b0] font-normal mt-[2px]">002559</span>
        </div>
        <div className={`h-[37px] flex items-center pl-[5px] pr-[5px] text-[28px] ${R}`}>
          <span className="w-[118px]">10.79</span>
          <span className="flex items-center"><span className="text-[32px] leading-none mr-[-2px]">▲</span>0.54</span>
          <span className="ml-auto">5.27%</span>
        </div>
      </div>
      <QuoteRows rows={asks} />
      <div className="h-[2px] mt-[1px] flex">
        <div className="w-[155px] bg-[#a87828]" />
        <div className="flex-1 bg-[#286898]" />
      </div>
      <QuoteRows rows={bids} />
      <div className={`border-t-2 ${LINE} mt-[1px] pt-[1px]`}>
        {info.map(([a, b, c, d, e, f]) => (
          <div key={a} className="h-[28.6px] grid grid-cols-[60px_100px_70px_1fr] items-center pl-[2px] pr-[3px]">
            <span className={`text-[22px] ${G}`}>{a}</span>
            <span className={`text-right ${c}`}>{b}</span>
            <span className={`text-[22px] pl-[8px] ${G}`}>{d}</span>
            <span className={`text-right ${f}`}>{e}</span>
          </div>
        ))}
      </div>
      <div className={`border-t-2 ${LINE} h-[94px]`}>
        {info2.map(([a, b, d, e]) => (
          <div key={a} className="h-[28.6px] grid grid-cols-[60px_100px_70px_1fr] items-center pl-[2px] pr-[3px]">
            <span className={`text-[22px] ${G} ${a.length > 3 ? "tracking-[-1px]" : ""}`}>{a}</span>
            <span className={`text-right ${G}`}>{b}</span>
            <span className={`text-[22px] pl-[8px] ${G}`}>{d}</span>
            <span className={`text-right ${G}`}>{e}</span>
          </div>
        ))}
      </div>
      <div className={`border-t-2 ${LINE} h-[62px]`}>
        {[["净流入额",66,"1.70亿","12%"],["大宗流入",44,"1.15亿","8%"]].map(([a, w, v, p]) => (
          <div key={a as string} className="h-[29px] grid grid-cols-[104px_66px_95px_1fr] items-center pl-[2px] pr-[3px]">
            <span className={`text-[22px] ${G}`}>{a}</span>
            <span style={{ width: w as number }} className="h-[11px] bg-[#ff3232]" />
            <span className={`text-right ${R}`}>{v}</span>
            <span className={`text-right ${R}`}>{p}</span>
          </div>
        ))}
      </div>
      <div className={`border-t-2 ${LINE}`}>
        {ticks.map(([t, p, v, s, c], i) => {
          const big = v.endsWith("m");
          return (
            <div key={i} className="h-[27px] grid grid-cols-[60px_95px_94px_32px_1fr] items-center pl-[2px] pr-[3px]">
              <span className={G}>{t}</span>
              <span className={`text-right ${R}`}>{p}</span>
              <span className={`text-right ${big ? M : "text-[#c8c800]"}`}>{v.replace("m", "")}</span>
              <span className={`text-center pl-[14px] ${s === "S" ? N : R}`}>{s}</span>
              <span className="text-right text-[#909090]">{c}</span>
            </div>
          );
        })}
      </div>
    </div>
  );
}

function Box({ children }: { children: React.ReactNode }) {
  return (
    <div className="w-[28px] h-[24px] border-2 border-[#4a8ee8] bg-white flex items-center justify-center text-[#2060c0] text-[13px] leading-none">{children}</div>
  );
}

function Arrow({ r }: { r: number }) {
  return (
    <svg width={26} height={26} viewBox="0 0 26 26">
      <path transform={`rotate(${r} 13 13)`} d="M13 2 L23 12 H17 V24 H9 V12 H3 Z" fill="#f2f6fc" stroke="#4a8ee8" strokeWidth={1.6} />
    </svg>
  );
}

function Bars({ colors }: { colors: string[] }) {
  return (
    <div className="flex gap-[2px]">
      {colors.map((c, i) => (
        <div key={i} className="w-[5px] h-[13px]" style={{ background: `repeating-linear-gradient(${c} 0 2px, #fff 2px 3px)` }} />
      ))}
    </div>
  );
}

function SideItem({ children }: { children: React.ReactNode }) {
  return <div className="h-[34.4px] flex-none flex items-center justify-center">{children}</div>;
}

function SideBar() {
  const nums = ["1", "5", "15", "30", "60"];
  const cjk = ["周", "月", "N", "多", "季", "年"];
  return (
    <div className="flex-1 bg-[#f0f0f0] text-[#24508e] text-[16px] flex flex-col overflow-hidden">
      <SideItem><Arrow r={-90} /></SideItem>
      <SideItem><Arrow r={0} /></SideItem>
      <SideItem><Arrow r={180} /></SideItem>
      <SideItem><Box><Bars colors={["#18a018", "#e02020"]} /></Box></SideItem>
      <SideItem><Box><Bars colors={["#e02020", "#18a018", "#2040e0"]} /></Box></SideItem>
      <SideItem>
        <Box><svg width={22} height={16} viewBox="0 0 22 16"><path d="M1 14 L7 8 L10 10 L20 3" stroke="#e02020" strokeWidth={1.4} fill="none" /></svg></Box>
      </SideItem>
      <SideItem>
        <Box><svg width={22} height={16} viewBox="0 0 22 16"><path d="M4 1 V15 M11 0 V14 M18 1 V13" stroke="#c02020" strokeWidth={1} /><rect x={2} y={4} width={4} height={6} fill="#e02020" /><rect x={9} y={5} width={4} height={6} fill="#109010" /><rect x={16} y={2} width={4} height={6} fill="#e02020" /></svg></Box>
      </SideItem>
      <SideItem>
        <svg width={30} height={24} viewBox="0 0 30 24"><rect x={6} y={1} width={23} height={17} rx={2} fill="#fff" stroke="#4a8ee8" strokeWidth={1.5} /><rect x={1} y={5} width={23} height={17} rx={2} fill="#fff" stroke="#4a8ee8" strokeWidth={1.5} /><path d="M5 10 H20 M5 13.5 H20 M5 17 H20" stroke="#808080" strokeWidth={1.6} /></svg>
      </SideItem>
      <SideItem><Box>F10</Box></SideItem>
      <SideItem>
        <Box><svg width={20} height={16} viewBox="0 0 20 16"><rect x={2} y={1} width={8} height={4} fill="#f0b020" /><rect x={10} y={6} width={8} height={4} fill="#f0b020" /><rect x={10} y={11} width={8} height={4} fill="#f0b020" /><path d="M4 5 V13 H10 M4 8 H10" stroke="#2060c0" fill="none" /></svg></Box>
      </SideItem>
      <SideItem><Box><span className="text-[#f06820] text-[16px] font-bold">自</span></Box></SideItem>
      <SideItem><Box>F12</Box></SideItem>
      <SideItem>
        <div className="w-[28px] h-[24px] border-2 border-[#30a0a0] rounded-[6px] bg-white flex items-center justify-center text-[#1858a8] text-[13px] italic font-bold leading-none">f(x)</div>
      </SideItem>
      <SideItem>
        <Box><div className="w-[14px] h-[14px] rounded-full border-[3px] border-[#3880d8]" /></Box>
      </SideItem>
      <div className="h-[2px] my-[6px] mx-[5px] bg-[#b8b8b8] flex-none" />
      <SideItem>
        <Box><svg width={22} height={16} viewBox="0 0 22 16"><path d="M1 5 L5 2 L9 6 L13 3 L17 6 L21 3" stroke="#e02020" strokeWidth={1.3} fill="none" /><path d="M1 12 L5 9 L9 13 L13 10 L17 13 L21 10" stroke="#2040e0" strokeWidth={1.3} fill="none" /></svg></Box>
      </SideItem>
      <SideItem><span className="text-[#3048c0] text-[14px] font-bold">RSI</span></SideItem>
      <SideItem><span className="text-[#c82020] text-[24px] font-bold leading-none">S</span></SideItem>
      <SideItem>
        <svg width={28} height={28} viewBox="0 0 28 28"><path d="M14 1 L19 7 H16 V12 H21 V9 L27 14 L21 19 V16 H16 V21 H19 L14 27 L9 21 H12 V16 H7 V19 L1 14 L7 9 V12 H12 V7 H9 Z" fill="#1040c0" /></svg>
      </SideItem>
      <SideItem>
        <svg width={26} height={26} viewBox="0 0 26 26"><path d="M4 19 L18 4 L23 8 L8 23 L3 24 Z" fill="#f0a830" stroke="#806020" strokeWidth={1} /><path d="M18 4 L20 2 L25 6 L23 8 Z" fill="#d06050" /></svg>
      </SideItem>
      <div className="h-[2px] my-[6px] mx-[5px] bg-[#b8b8b8] flex-none" />
      <SideItem><Box>FS</Box></SideItem>
      <SideItem>
        <Box><svg width={20} height={16} viewBox="0 0 20 16"><path d="M3 9 A7 6 0 0 1 16 5 L18 3 V9 H12 L14 7 A5 4 0 0 0 5 10 Z" fill="#30a860" /><path d="M17 8 A7 6 0 0 1 4 12 L2 14 V8 H8 L6 10 A5 4 0 0 0 15 7 Z" fill="#50c880" /></svg></Box>
      </SideItem>
      {nums.map((n) => (
        <SideItem key={n}><span className="tracking-[1px]">{n}</span></SideItem>
      ))}
      <SideItem>
        <div className="w-full h-full border-t border-l-2 border-[#b0b0b0] bg-[#fafafa] flex items-center justify-center text-[17px]">日</div>
      </SideItem>
      {cjk.map((n) => (
        <SideItem key={n}><span className="text-[17px]">{n}</span></SideItem>
      ))}
    </div>
  );
}

const indices = [
  ["上证","3046.02","18.62","0.62%","3706"],
  ["沪深","3544.91","15.19","0.43%","2254"],
  ["创业","1807.29","17.35","0.97%","2079"],
];

function IndexBar() {
  return (
    <div className="h-[36px] flex-none bg-[#f0f0f0] flex items-center text-[21px] leading-none whitespace-nowrap">
      <div className="w-[17px] h-[24px] ml-[2px] mr-[6px] rounded-[2px] border border-[#b08020] bg-[#f4c040] flex-none flex items-center justify-center">
        <div className="w-[11px] h-[8px] bg-[#fff0b0] border border-[#b08020]" />
      </div>
      {indices.map(([n, a, b, c, d]) => (
        <div key={n} className="flex items-center flex-none w-[412px] pt-[3px]">
          <span className="w-[53px] text-[22px] text-[#303030]">{n}</span>
          <span className="w-[103px] text-[#f00000] font-bold">{a}</span>
          <span className="w-[75px] text-[#f00000] font-bold">{b}</span>
          <span className="w-[86px] text-[#f00000] font-bold">{c}</span>
          <span className="text-[#101010] font-bold">{d}<span className="font-normal text-[22px]">亿</span></span>
        </div>
      ))}
    </div>
  );
}

function Watermark() {
  return (
    <div className="absolute right-0 bottom-0 w-[800px] h-[81px] bg-[#80addb] flex items-center">
      <span className="ml-[17px] w-[286px] text-[#14148c] text-[56px] font-black leading-none">公式指标网</span>
      <svg width={84} height={80} viewBox="0 0 84 80" className="flex-none">
        <path d="M8 42 A34 37 0 0 1 76 42" fill="none" stroke="#d8664e" strokeWidth={9} />
        <path d="M8 50 A34 32 0 0 0 76 50" fill="none" stroke="#ecca4c" strokeWidth={9} />
        <path d="M36 4 H48 V14 L56 24 V36 H62 V46 H52 V52 H60 V62 H50 V74 H36 V62 H24 V52 H32 V46 H22 V36 H28 V24 L36 14 Z" fill="#ecca4c" />
      </svg>
      <span className="ml-[25px] text-white text-[50px] font-bold leading-none font-['DejaVu_Serif',serif] [-webkit-text-stroke:1px_white] mb-[4px]">www.9m8.cn</span>
    </div>
  );
}

function LeftColumn() {
  return (
    <div className="w-[1787px] flex-none flex flex-col">
      <Toolbar />
      <div className={`h-[698px] flex-none flex border-b-2 ${LINE}`}>
        <div className={`relative w-[1712px] flex-none border-r-2 ${LINE} overflow-hidden`}>
          <PriceSvg />
          <TextRows />
        </div>
        <PriceAxis />
      </div>
      <div className="h-[517px] flex-none flex">
        <div className={`relative w-[1712px] flex-none border-r-2 ${LINE} border-b-2 overflow-hidden`}>
          <VolumeSvg />
          <div className="absolute left-[3px] top-0 h-[26px] flex items-center leading-none text-[#c4c4c4] whitespace-nowrap">
            <span className="w-[18px] h-[18px] rounded-full bg-[#7a7a7a] text-black text-[11px] flex items-center justify-center mr-[5px]">∨</span>
            <span className="text-[18px]">VOLUME: 1286182.63</span>
            <span className="ml-[7px] text-[18px]">MA5: 1128295.50</span>
            <span className="ml-[7px] text-[18px] text-[#e8e800]">MA10: 1195195.25</span>
          </div>
        </div>
        <div className={`relative flex-1 flex border-b-2 ${LINE}`}>
          <VolumeAxis />
        </div>
      </div>
      <DateAxis />
      <TabRow items={tabsA} h="h-[26px]" tail="港版" />
      <TabRow items={tabsB} h="h-[27px]" />
    </div>
  );
}

export default function App() {
  return (
    <div className="relative w-[2160px] h-[1395px] overflow-hidden bg-black flex flex-col font-['Liberation_Sans','Noto_Sans_CJK_SC',sans-serif]">
      <TopBar />
      <div className="flex-1 flex min-h-0">
        <LeftColumn />
        <RightPanel />
        <SideBar />
      </div>
      <IndexBar />
      <Watermark />
    </div>
  );
}
